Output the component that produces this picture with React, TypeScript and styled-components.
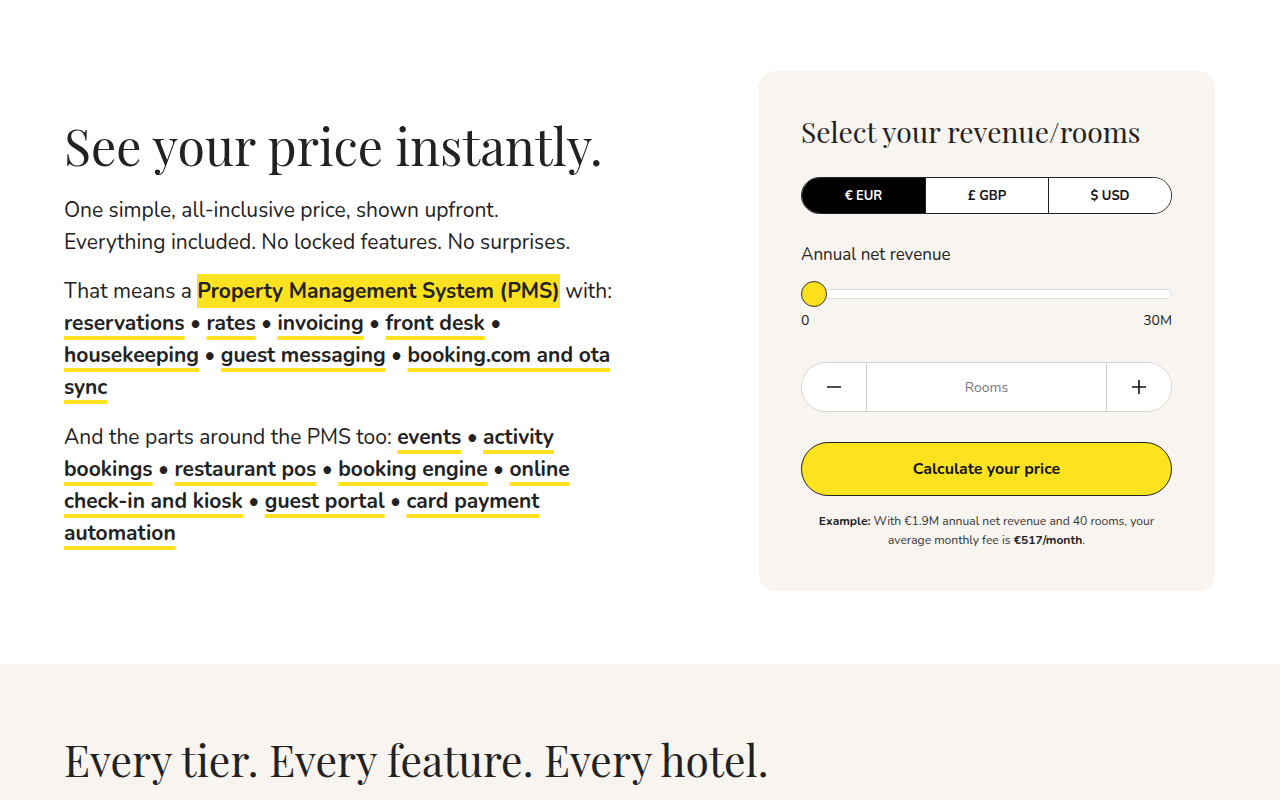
import React from "react";
import styled, { createGlobalStyle } from "styled-components";

const Global = createGlobalStyle`
  * { box-sizing: border-box; }
  body { margin: 0; background: #fff; color: #222; font-family: "Nunito", "Lato", sans-serif; }
`;

const SERIF = `"Playfair Display", "Liberation Serif", serif`;
const SANS = `"Nunito", "Lato", sans-serif`;

const Hero = styled.section`
  display: grid;
  grid-template-columns: 1fr 456px;
  align-items: center;
  column-gap: 96px;
  padding: 71px 65px 73px 64px;
`;

const Left = styled.div`
  max-width: 560px;
  padding-top: 4px;
`;

const Title = styled.h1`
  font-family: ${SERIF};
  font-weight: 400;
  font-size: 50px;
  line-height: 56px;
  margin: 0 0 20px;
  color: #222;
  white-space: nowrap;
`;

const Para = styled.p<{ $gap?: number }>`
  font-family: ${SANS};
  font-size: 21px;
  line-height: 32px;
  margin: 0 0 ${(p) => p.$gap ?? 18}px;
  color: #222;
  &:last-child { margin-bottom: 0; }
`;

const Highlight = styled.span`
  background: #ffe21f;
  font-weight: 700;
  padding: 3px 0;
`;

const Tag = styled.a`
  color: #222;
  font-weight: 700;
  text-decoration: underline;
  text-decoration-color: #ffe21f;
  text-decoration-thickness: 4px;
  text-underline-offset: 6px;
  text-decoration-skip-ink: none;
`;

const Card = styled.div`
  background: #f8f4f0;
  border-radius: 16px;
  padding: 42px 43px 41px 42px;
  display: flex;
  flex-direction: column;
`;

const CardTitle = styled.h2`
  font-family: ${SERIF};
  font-weight: 400;
  font-size: 28.3px;
  line-height: 36px;
  margin: 0 0 28px;
  color: #222;
  white-space: nowrap;
`;

const Toggle = styled.div`
  display: grid;
  grid-template-columns: repeat(3, 1fr);
  border: 1px solid #222;
  border-radius: 999px;
  overflow: hidden;
  height: 37px;
`;

const Seg = styled.button<{ $active?: boolean }>`
  border: 0;
  border-left: ${(p) => (p.$active ? "0" : "1px solid #222")};
  &:first-child { border-left: 0; }
  background: ${(p) => (p.$active ? "#000" : "#fff")};
  color: ${(p) => (p.$active ? "#fff" : "#111")};
  font-family: ${SANS};
  font-weight: 700;
  font-size: 13px;
  cursor: pointer;
`;

const Label = styled.div`
  font-family: ${SANS};
  font-size: 17px;
  line-height: 24px;
  margin: 29px 0 14px;
  color: #222;
`;

const SliderWrap = styled.div`
  position: relative;
  height: 26px;
  display: flex;
  align-items: center;
`;

const Track = styled.div`
  flex: 1;
  height: 10px;
  background: #fff;
  border: 1px solid #ddd;
  border-radius: 6px;
`;

const Thumb = styled.div`
  position: absolute;
  left: 0;
  top: 0;
  width: 26px;
  height: 26px;
  border-radius: 50%;
  background: #fde01d;
  border: 1.5px solid #333;
`;

const Ticks = styled.div`
  display: flex;
  justify-content: space-between;
  font-family: ${SANS};
  font-size: 14px;
  line-height: 20px;
  margin-top: 4px;
  color: #222;
`;

const Stepper = styled.div`
  display: grid;
  grid-template-columns: 65px 1fr 65px;
  height: 50px;
  margin-top: 31px;
  background: #fff;
  border: 1px solid #d6d2ce;
  border-radius: 999px;
  overflow: hidden;
`;

const StepBtn = styled.button<{ $side: "l" | "r" }>`
  border: 0;
  background: #fff;
  border-${(p) => (p.$side === "l" ? "right" : "left")}: 1px solid #d6d2ce;
  display: flex;
  align-items: center;
  justify-content: center;
  color: #111;
  padding: 0;
`;

const RoomsInput = styled.div`
  display: flex;
  align-items: center;
  justify-content: center;
  font-family: ${SANS};
  font-size: 14px;
  color: #777;
`;

const Cta = styled.button`
  margin-top: 30px;
  height: 54px;
  border-radius: 999px;
  border: 1px solid #222;
  background: #fde21f;
  font-family: ${SANS};
  font-weight: 700;
  font-size: 16px;
  color: #111;
`;

const Example = styled.p`
  font-family: ${SANS};
  font-size: 12.1px;
  line-height: 19px;
  text-align: center;
  margin: 16px 0 0;
  color: #333;
  b { font-weight: 700; color: #222; }
`;

const Tiers = styled.section`
  background: #f8f4f0;
  padding: 70px 64px 40px;
`;

const TiersTitle = styled.h2`
  font-family: ${SERIF};
  font-weight: 400;
  font-size: 42.6px;
  line-height: 52px;
  margin: 0;
  color: #222;
`;

const Dot = () => <> • </>;

export default function App() {
  return (
    <>
      <Global />
      <Hero>
        <Left>
          <Title>See your price instantly.</Title>
          <Para $gap={17}>
            One simple, all-inclusive price, shown upfront.
            <br />
            Everything included. No locked features. No surprises.
          </Para>
          <Para>
            That means a <Highlight>Property Management System (PMS)</Highlight> with:{" "}
            <Tag>reservations</Tag>
            <Dot />
            <Tag>rates</Tag>
            <Dot />
            <Tag>invoicing</Tag>
            <Dot />
            <Tag>front desk</Tag>
            <Dot />
            <Tag>housekeeping</Tag>
            <Dot />
            <Tag>guest messaging</Tag>
            <Dot />
            <Tag>booking.com and ota sync</Tag>
          </Para>
          <Para>
            And the parts around the PMS too: <Tag>events</Tag>
            <Dot />
            <Tag>activity bookings</Tag>
            <Dot />
            <Tag>restaurant pos</Tag>
            <Dot />
            <Tag>booking engine</Tag>
            <Dot />
            <Tag>online check-in and kiosk</Tag>
            <Dot />
            <Tag>guest portal</Tag>
            <Dot />
            <Tag>card payment automation</Tag>
          </Para>
        </Left>
        <Card>
          <CardTitle>Select your revenue/rooms</CardTitle>
          <Toggle>
            <Seg $active>€ EUR</Seg>
            <Seg>£ GBP</Seg>
            <Seg>$ USD</Seg>
          </Toggle>
          <Label>Annual net revenue</Label>
          <SliderWrap>
            <Track />
            <Thumb />
          </SliderWrap>
          <Ticks>
            <span>0</span>
            <span>30M</span>
          </Ticks>
          <Stepper>
            <StepBtn $side="l" aria-label="decrease">
              <svg width="16" height="16" viewBox="0 0 16 16">
                <path d="M1 8h14" stroke="#111" strokeWidth="1.6" />
              </svg>
            </StepBtn>
            <RoomsInput>Rooms</RoomsInput>
            <StepBtn $side="r" aria-label="increase">
              <svg width="16" height="16" viewBox="0 0 16 16">
                <path d="M1 8h14M8 1v14" stroke="#111" strokeWidth="1.6" />
              </svg>
            </StepBtn>
          </Stepper>
          <Cta>Calculate your price</Cta>
          <Example>
            <b>Example:</b> With €1.9M annual net revenue and 40 rooms, your average monthly fee is{" "}
            <b>€517/month</b>.
          </Example>
        </Card>
      </Hero>
      <Tiers>
        <TiersTitle>Every tier. Every feature. Every hotel.</TiersTitle>
      </Tiers>
    </>
  );
}
